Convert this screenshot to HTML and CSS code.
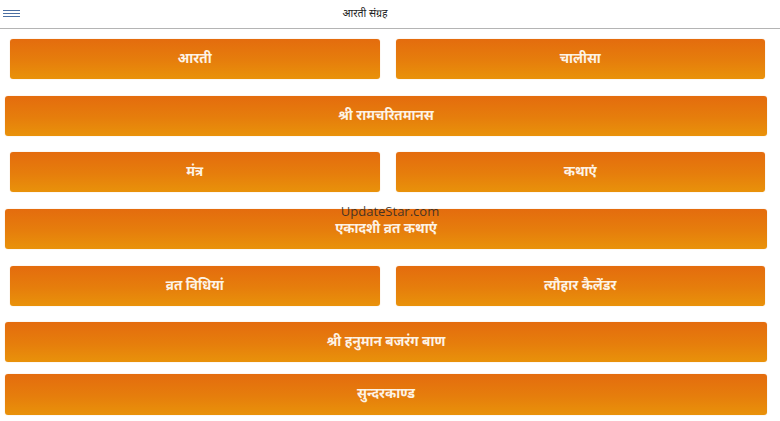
FILE: index.html
```html
<!DOCTYPE html>
<html>
<head>
<meta charset="utf-8">
<link rel="stylesheet" href="styles.css">
</head>
<body>
<header class="topbar">
  <div class="menu-icon"><span></span><span></span><span></span></div>
  <div class="title">आरती संग्रह</div>
</header>
<main class="menu">
  <div class="row half">
    <div class="btn">आरती</div>
    <div class="btn">चालीसा</div>
  </div>
  <div class="row full"><div class="btn">श्री रामचरितमानस</div></div>
  <div class="row half">
    <div class="btn">मंत्र</div>
    <div class="btn">कथाएं</div>
  </div>
  <div class="row full"><div class="btn">एकादशी व्रत कथाएं</div></div>
  <div class="row half">
    <div class="btn">व्रत विधियां</div>
    <div class="btn">त्यौहार कैलेंडर</div>
  </div>
  <div class="row full"><div class="btn">श्री हनुमान बजरंग बाण</div></div>
  <div class="row full last"><div class="btn">सुन्दरकाण्ड</div></div>
</main>
<div class="watermark">UpdateStar.com</div>
</body>
</html>
```
FILE: styles.css
```css
html, body {
  margin: 0;
  padding: 0;
  background: #ffffff;
  width: 780px;
  height: 421px;
  overflow: hidden;
  font-family: "Noto Sans Devanagari", "Lohit Devanagari", "Noto Sans", "Liberation Sans", sans-serif;
}
.topbar {
  height: 28px;
  border-bottom: 1px solid #b4b4b4;
  display: flex;
  align-items: center;
  justify-content: center;
  position: relative;
}
.menu-icon {
  position: absolute;
  left: 3px;
  top: 10px;
  width: 17px;
  display: flex;
  flex-direction: column;
  gap: 2px;
}
.menu-icon span {
  display: block;
  height: 1px;
  background: #4b6fa3;
}
.title {
  font-size: 10.5px;
  color: #222;
  margin-left: -50px;
  margin-top: 1px;
}
.menu {
  display: flex;
  flex-direction: column;
  gap: 16.67px;
  padding-top: 10px;
}
.row {
  display: flex;
  height: 40px;
}
.row.half {
  padding-left: 10px;
  width: 755px;
  gap: 16px;
}
.row.full {
  padding-left: 5px;
  width: 762px;
}
.row.last {
  margin-top: -5px;
  height: 41px;
}
.btn {
  flex: 1;
  border-radius: 3px;
  background: linear-gradient(to bottom, #e46c0e 0%, #e67e0c 55%, #e9920a 100%);
  color: #fdf3e6;
  font-weight: bold;
  font-size: 13.5px;
  padding-top: 2px;
  display: flex;
  align-items: center;
  justify-content: center;
  box-shadow: 0 0 1px rgba(230, 130, 20, 0.5);
}
.watermark {
  position: absolute;
  left: 0;
  width: 780px;
  top: 202px;
  text-align: center;
  font-family: "Open Sans", "Liberation Sans", sans-serif;
  font-size: 13px;
  color: rgba(40, 40, 40, 0.85);
}
```
